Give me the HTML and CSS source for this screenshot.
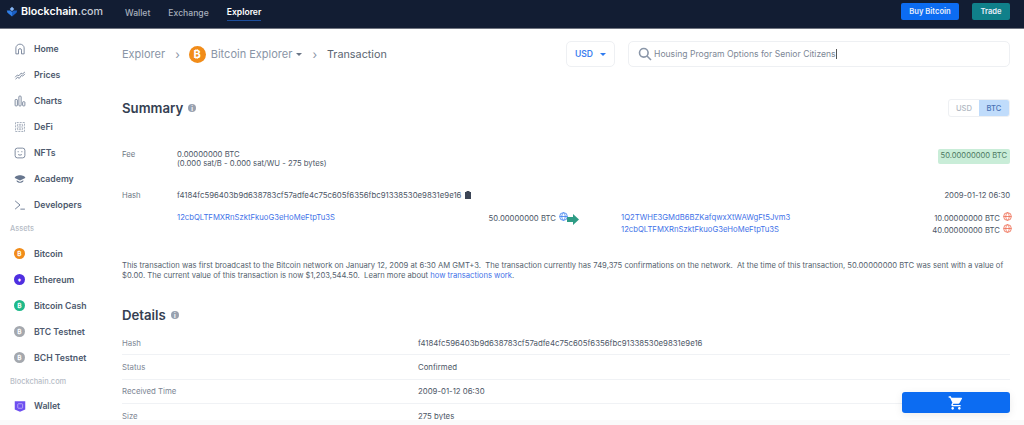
FILE: index.html
```html
<!DOCTYPE html>
<html lang="en">
<head>
  <meta charset="UTF-8" />
  <title>Bitcoin Transaction</title>
  <link rel="stylesheet" href="styles.css">
</head>
<body>

  <header class="topbar">
    <a class="logo">
      <svg width="12" height="12" viewBox="0 0 16 16"><path d="M8 1l3 3-3 3-3-3z" fill="#85b5f5"/><path d="M1 6h5l2 2v6l-6-5z" fill="#2f7fe8"/><path d="M15 6h-5l-2 2v6l6-5z" fill="#1a5fc4"/></svg>
      <span>Blockchain<span class="logo-dim">.com</span></span>
    </a>
    <nav class="topnav">
      <a>Wallet</a>
      <a>Exchange</a>
      <a class="active">Explorer</a>
    </nav>
    <div class="topbar-btns">
      <button class="btn btn-blue">Buy Bitcoin</button>
      <button class="btn btn-teal">Trade</button>
    </div>
  </header>

  <div class="layout">
    <aside class="sidebar">
      <a class="side-item"><svg class="side-icon" viewBox="0 0 16 16" fill="none" stroke="#67768e" stroke-width="1.1"><path d="M2.5 14.5V6.5C2.5 4 5 1.5 8 1.5s5.500 2.500 5.500 5v8h-3.500V9.500a2 2 0 0 0-4 0v5z"/></svg>Home</a>
      <a class="side-item"><svg class="side-icon" viewBox="0 0 16 16" fill="none" stroke="#67768e" stroke-width="1.1"><path d="M1.500 11l3-3 2 1 3-3.500 2 1 3-2.500M2 13.500l3-2.500 2 1.500 3-4 1.500 1 3-3"/></svg>Prices</a>
      <a class="side-item"><svg class="side-icon" viewBox="0 0 16 16" fill="none" stroke="#67768e" stroke-width="1.1"><rect x="1.500" y="6" width="3" height="8.500" rx=".8"/><rect x="6.500" y="1.500" width="3" height="13" rx=".8"/><rect x="11.500" y="9" width="3" height="5.500" rx=".8"/></svg>Charts</a>
      <a class="side-item"><svg class="side-icon" viewBox="0 0 16 16" fill="none" stroke="#67768e" stroke-width="1" stroke-dasharray="1 1"><rect x="2" y="2" width="12" height="12"/><rect x="4.500" y="4.500" width="7" height="7"/><rect x="6.500" y="6.500" width="3" height="3"/></svg>DeFi</a>
      <a class="side-item"><svg class="side-icon" viewBox="0 0 16 16" fill="none" stroke="#67768e" stroke-width="1.1"><rect x="1.500" y="1.500" width="13" height="13" rx="3"/><path d="M5.500 5.500v1.500M10.500 5.500v1.500M5.500 10c1.500 1 3.500 1 5 0"/></svg>NFTs</a>
      <a class="side-item"><svg class="side-icon" viewBox="0 0 16 16" fill="#67768e"><path d="M8 3c3.500 0 7 1.500 7 3.500L8 10 1 6.500C1 4.500 4.500 3 8 3z"/><path d="M3.500 9.500L8 12l4.500-2.500V11c-1 1.500-3 2-4.500 2s-3.500-.5-4.500-2z"/></svg>Academy</a>
      <a class="side-item"><svg class="side-icon" viewBox="0 0 16 16" fill="none" stroke="#67768e" stroke-width="1.200"><path d="M1.500 2.500L8 8l-6.500 5.500M8.500 13.500h6"/></svg>Developers</a>

      <div class="side-title">Assets</div>
      <a class="side-item"><span class="coin coin-btc">₿</span>Bitcoin</a>
      <a class="side-item"><span class="coin coin-eth">♦</span>Ethereum</a>
      <a class="side-item"><span class="coin coin-bch">₿</span>Bitcoin Cash</a>
      <a class="side-item"><span class="coin coin-gray">₿</span>BTC Testnet</a>
      <a class="side-item"><span class="coin coin-gray">₿</span>BCH Testnet</a>

      <div class="side-title">Blockchain.com</div>
      <a class="side-item"><svg class="side-icon" viewBox="0 0 16 16"><path d="M1 1.500h14v11l-7 3-7-3z" fill="#6e4ff0"/><rect x="5" y="5" width="6.500" height="6" rx="1" fill="none" stroke="#c9bdfa"/></svg>Wallet</a>
    </aside>

    <main class="content">
      <div class="crumbs">
        <a class="crumb">Explorer</a>
        <span class="crumb-sep">›</span>
        <span class="coin-big">₿</span>
        <a class="crumb">Bitcoin Explorer</a>
        <span class="caret caret-gray"></span>
        <span class="crumb-sep crumb-sep-b">›</span>
        <span class="crumb-current">Transaction</span>
        <div class="currency">USD<span class="caret caret-blue"></span></div>
        <div class="search">
          <svg width="14" height="14" viewBox="0 0 14 14" fill="none" stroke="#8a96a8" stroke-width="1.600"><circle cx="5.800" cy="5.800" r="4.300"/><path d="M9 9l4 4"/></svg>
          <span>Housing Program Options for Senior Citizens</span><span class="cursor"></span>
        </div>
      </div>

      <div class="section-head summary-head">
        <h2>Summary</h2><span class="info">i</span>
        <div class="toggle"><span class="toggle-off">USD</span><span class="toggle-on">BTC</span></div>
      </div>

      <div class="row fee-row">
        <div class="label">Fee</div>
        <div class="grow">0.00000000 BTC<br>(0.000 sat/B - 0.000 sat/WU - 275 bytes)</div>
        <div class="amount-badge">50.00000000 BTC</div>
      </div>

      <div class="row hash-row">
        <div class="label">Hash</div>
        <div class="grow hash">f4184fc596403b9d638783cf57adfe4c75c605f6356fbc91338530e9831e9e16
          <svg class="clip" width="6" height="8" viewBox="0 0 6 8"><path d="M0 1h1.500V0h3v1H6v7H0z" fill="#3c4656"/></svg>
        </div>
        <div>2009-01-12 06:30</div>
      </div>

      <div class="tx-flow">
        <div class="tx-in">
          <a class="link">12cbQLTFMXRnSzktFkuoG3eHoMeFtpTu3S</a>
          <div class="tx-amt">50.00000000 BTC
            <svg class="globe" viewBox="0 0 10 10" fill="none" stroke="#3d7ff0" stroke-width=".9"><circle cx="5" cy="5" r="4.300"/><path d="M.7 5h8.600M5 .7c-2.500 2.500-2.500 6.100 0 8.600M5 .7c2.500 2.500 2.500 6.100 0 8.600"/></svg>
          </div>
        </div>
        <svg class="tx-arrow" width="12" height="11" viewBox="0 0 12 11"><path d="M0 3h6V0l6 5.500L6 11V8H0z" fill="#2e9c85"/></svg>
        <div class="tx-out">
          <div class="tx-line">
            <a class="link">1Q2TWHE3GMdB6BZKafqwxXtWAWgFt5Jvm3</a>
            <div class="tx-amt">10.00000000 BTC
              <svg class="globe" viewBox="0 0 10 10" fill="none" stroke="#ef6a50" stroke-width=".9"><circle cx="5" cy="5" r="4.300"/><path d="M.7 5h8.600M5 .7c-2.500 2.500-2.500 6.100 0 8.600M5 .7c2.500 2.500 2.500 6.100 0 8.600"/></svg>
            </div>
          </div>
          <div class="tx-line">
            <a class="link">12cbQLTFMXRnSzktFkuoG3eHoMeFtpTu3S</a>
            <div class="tx-amt">40.00000000 BTC
              <svg class="globe" viewBox="0 0 10 10" fill="none" stroke="#ef6a50" stroke-width=".9"><circle cx="5" cy="5" r="4.300"/><path d="M.7 5h8.600M5 .7c-2.500 2.500-2.500 6.100 0 8.600M5 .7c2.500 2.500 2.500 6.100 0 8.600"/></svg>
            </div>
          </div>
        </div>
      </div>

      <p class="blurb">This transaction was first broadcast to the Bitcoin network on January 12, 2009 at 6:30 AM GMT+3.&nbsp; The transaction currently has 749,375 confirmations on the network.&nbsp; At the time of this transaction, 50.00000000 BTC was sent with a value of $0.00. The current value of this transaction is now $1,203,544.50.&nbsp; Learn more about <a class="link">how transactions work</a>.</p>

      <div class="section-head details-head">
        <h2>Details</h2><span class="info">i</span>
      </div>

      <div class="detail-row"><div class="detail-label">Hash</div><div>f4184fc596403b9d638783cf57adfe4c75c605f6356fbc91338530e9831e9e16</div></div>
      <div class="detail-row"><div class="detail-label">Status</div><div>Confirmed</div></div>
      <div class="detail-row"><div class="detail-label">Received Time</div><div>2009-01-12 06:30</div></div>
      <div class="detail-row"><div class="detail-label">Size</div><div>275 bytes</div></div>
    </main>
  </div>

  <div class="page-fade"></div>

  <button class="cart-btn">
    <svg width="16" height="16" viewBox="0 0 24 24" fill="#fff"><path d="M7 18c-1.100 0-2 .9-2 2s.9 2 2 2 2-.9 2-2-.9-2-2-2zM1 2v2h2l3.600 7.590-1.350 2.450c-.16.280-.25.610-.25.960 0 1.100.9 2 2 2h12v-2H7.420c-.14 0-.25-.11-.25-.25l.03-.12.9-1.630h7.450c.75 0 1.410-.41 1.750-1.030l3.580-6.490A1 1 0 0 0 20 4H5.210l-.94-2zm16 16c-1.100 0-2 .9-2 2s.9 2 2 2 2-.9 2-2-.9-2-2-2z"/></svg>
  </button>

</body>
</html>
```

FILE: styles.css
```css
* {
  box-sizing: border-box;
}

html, body {
  height: 425px;
  overflow: hidden;
}

body {
  margin: 0;
  background: #fff;
  font-family: Inter, "Liberation Sans", sans-serif;
  font-size: 7.7px;
  color: #4c5666;
}

/* top bar */
.topbar {
  display: flex;
  align-items: flex-start;
  height: 29px;
  padding: 3px 14px 0 6px;
  background: #121d33;
  border-bottom: 1px solid #6f7480;
}

.logo {
  display: flex;
  align-items: center;
  gap: 3px;
  width: 119px;
  height: 17px;
  font-size: 10.7px;
  font-weight: 600;
  color: #fff;
}

.logo-dim {
  color: #c6ccd6;
  font-weight: 500;
}

.topnav {
  display: flex;
  gap: 18px;
  height: 18px;
  font-size: 8.6px;
  font-weight: 500;
  color: #a8b0bd;
}

.topnav a {
  display: flex;
  align-items: center;
  height: 18px;
  padding-top: 1px;
}

.topnav .active {
  color: #fff;
  font-weight: 600;
  border-bottom: 1px solid #1d4f9e;
}

.topbar-btns {
  display: flex;
  gap: 13px;
  margin-left: auto;
}

.btn {
  height: 17px;
  border: 0;
  border-radius: 2px;
  padding: 0;
  font-family: inherit;
  font-size: 7.6px;
  font-weight: 600;
  color: #e8eefa;
}

.btn-blue {
  width: 58px;
  background: #0c6cf2;
}

.btn-teal {
  width: 38px;
  background: #10808a;
}

.layout {
  display: flex;
}

/* left menu */
.sidebar {
  width: 122px;
  padding: 7px 0 0 14px;
  flex-shrink: 0;
}

.side-item {
  display: flex;
  align-items: center;
  gap: 8px;
  height: 26px;
  font-size: 8.7px;
  font-weight: 600;
  color: #4d596d;
}

.side-icon {
  width: 12px;
  height: 12px;
  flex-shrink: 0;
}

.side-title {
  margin: 6px 0 5.5px -4px;
  height: 11px;
  font-size: 7.4px;
  font-weight: 500;
  color: #b6bcc6;
}

.coin {
  display: flex;
  align-items: center;
  justify-content: center;
  width: 11px;
  height: 11px;
  margin: 0 1px 0 0;
  border-radius: 50%;
  font-size: 6.5px;
  font-weight: 700;
  color: #fff;
  flex-shrink: 0;
}

.coin-btc { background: #f18c19; }
.coin-eth { background: #4f2fe0; }
.coin-bch { background: #1fb98a; }
.coin-gray { background: #a4a8ae; }

/* main */
.content {
  flex: 1;
  padding-right: 14px;
  min-width: 0;
}

.crumbs {
  display: flex;
  align-items: center;
  height: 26px;
  margin-top: 12px;
  font-size: 11px;
  color: #8a95a6;
}

.crumb-sep {
  margin: 0 9px 0 10px;
  font-size: 12px;
}

.crumb-sep-b {
  margin-left: 10px;
  margin-right: 10px;
}

.coin-big {
  display: flex;
  align-items: center;
  justify-content: center;
  width: 17px;
  height: 17px;
  margin-right: 5px;
  border-radius: 50%;
  background: #f18c19;
  color: #fff;
  font-size: 11px;
  font-weight: 700;
}

.caret {
  width: 0;
  height: 0;
  border-left: 3px solid transparent;
  border-right: 3px solid transparent;
  border-top: 3px solid #6a7585;
}

.caret-gray {
  margin-left: 4px;
}

.caret-blue {
  margin-left: 7px;
  border-top-color: #2f7bf0;
}

.crumb-current {
  color: #5b6571;
  font-size: 10.8px;
}

.currency {
  display: flex;
  align-items: center;
  justify-content: center;
  width: 49px;
  height: 26px;
  margin-left: auto;
  border: 1px solid #eef0f3;
  border-radius: 5px;
  font-size: 8.6px;
  font-weight: 600;
  color: #3f7ff0;
}

.search {
  display: flex;
  align-items: center;
  width: 382px;
  height: 26px;
  margin-left: 13px;
  padding-left: 9px;
  border: 1px solid #eef0f3;
  border-radius: 5px;
  font-size: 8.6px;
  color: #7d8796;
}

.search svg {
  margin-right: 2px;
}

.cursor {
  width: 1px;
  height: 10px;
  background: #555;
}

.section-head {
  display: flex;
  align-items: center;
}

h2 {
  margin: 0;
  font-size: 13.2px;
  font-weight: 600;
  color: #353f52;
}

.info {
  display: flex;
  align-items: center;
  justify-content: center;
  width: 8px;
  height: 8px;
  margin-left: 5px;
  border-radius: 50%;
  background: #98a1b0;
  color: #fff;
  font-size: 6px;
  font-weight: 700;
}

.summary-head {
  height: 18px;
  margin-top: 32px;
}

.toggle {
  display: flex;
  margin-left: auto;
  height: 18px;
  border: 1px solid #eef0f3;
  border-radius: 3px;
  overflow: hidden;
  font-size: 7.6px;
  font-weight: 500;
}

.toggle-off {
  display: flex;
  align-items: center;
  justify-content: center;
  width: 30px;
  color: #b0b7c2;
}

.toggle-on {
  display: flex;
  align-items: center;
  justify-content: center;
  width: 30px;
  background: #c0dcfb;
  color: #4a72b5;
}

.row {
  display: flex;
  align-items: flex-start;
  line-height: 9.5px;
}

.label {
  width: 55px;
  flex-shrink: 0;
  color: #6e7785;
}

.grow {
  flex: 1;
}

.hash {
  font-size: 7.8px;
}

.fee-row {
  margin-top: 32.5px;
  height: 30px;
}

.amount-badge {
  padding: 2px 3px 3px;
  margin-top: -1px;
  border-radius: 2px;
  background: #c9edd8;
  color: #4d7a62;
  font-size: 7.6px;
  line-height: 10px;
}

.hash-row {
  margin-top: 11px;
}

.clip {
  margin-left: 1px;
  vertical-align: -1px;
}

.link {
  color: #3f72e8;
}

.tx-flow {
  display: flex;
  align-items: flex-start;
  margin-top: 12px;
  margin-left: 55px;
}

.tx-in {
  display: flex;
  justify-content: space-between;
  width: 391px;
  line-height: 12px;
}

.tx-arrow {
  margin: 2px 0 0 -1px;
  flex-shrink: 0;
}

.tx-out {
  flex: 1;
  margin-left: 42px;
  margin-right: -2px;
}

.tx-line {
  display: flex;
  justify-content: space-between;
  height: 12px;
  line-height: 12px;
}

.globe {
  width: 9px;
  height: 9px;
  margin-left: 1px;
  vertical-align: 0;
}

.blurb {
  margin: 25px 0 0;
  font-size: 7.65px;
  line-height: 9.5px;
  color: #555f6e;
}

.details-head {
  height: 18px;
  margin-top: 26px;
}

.detail-row {
  display: flex;
  align-items: center;
  height: 24.3px;
  font-size: 7.8px;
  border-bottom: 1px solid #f0f2f5;
}

.details-head + .detail-row {
  margin-top: 7px;
}

.detail-label {
  width: 296px;
  flex-shrink: 0;
  color: #7d8694;
}

/* faint strip along the bottom edge */
.page-fade {
  position: fixed;
  left: 0;
  right: 0;
  bottom: 0;
  height: 5px;
  background: #fafafa;
}

/* floating cart */
.cart-btn {
  position: fixed;
  left: 902px;
  top: 392px;
  display: flex;
  align-items: center;
  justify-content: center;
  width: 108px;
  height: 21px;
  padding: 0;
  border: 0;
  border-radius: 3px;
  background: #0c6cf2;
  box-shadow: 0 2px 8px rgba(0, 0, 0, 0.08);
}
```
